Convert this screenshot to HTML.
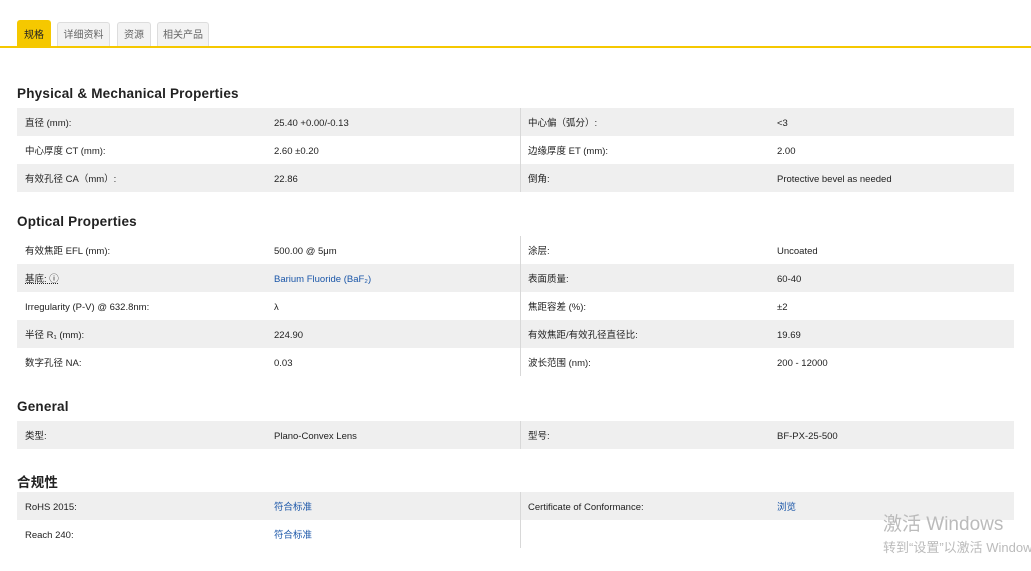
<!DOCTYPE html>
<html><head><meta charset="utf-8"><style>
*{margin:0;padding:0;box-sizing:border-box}
body{width:1031px;height:571px;background:#fff;position:relative;overflow:hidden;font-family:"Liberation Sans","Noto Sans CJK SC",sans-serif;color:#222}
.tab{position:absolute;font-size:10px;text-align:center;border:1px solid #ddd;border-bottom:none;background:#f3f3f3;color:#666;top:22px;height:25px;line-height:26px;border-radius:3px 3px 0 0}
.tab.on{background:#f5c800;border-color:#f5c800;color:#222;top:20px;height:27px;line-height:29px}
.line{position:absolute;left:0;top:46px;width:1031px;height:2px;background:#f5c800}
h2{position:absolute;left:17px;font-size:13.5px;font-weight:bold;color:#222;letter-spacing:.2px}
.row{position:absolute;left:17px;width:997px;height:28px;font-size:9.5px;line-height:28px}
.row.g{background:#efefef}
.row span{position:absolute;top:2px}
.a{left:8px}.b{left:257px}.c{left:511px}.d{left:760px}
.row:before{content:"";position:absolute;left:503px;top:0;width:1px;height:28px;background:#d8d8d8}
.lk{color:#1a56a8}
.wm1{position:absolute;left:883px;top:509px;font-size:19px;color:#bbb}
.wm2{position:absolute;left:883px;top:537px;font-size:13px;color:#bbb;white-space:nowrap}
</style></head><body>
<div class="tab on" style="left:17px;width:34px">规格</div>
<div class="tab" style="left:57px;width:53px">详细资料</div>
<div class="tab" style="left:117px;width:34px">资源</div>
<div class="tab" style="left:157px;width:52px">相关产品</div>
<div class="line"></div>

<h2 style="top:86px">Physical &amp; Mechanical Properties</h2>
<div class="row g" style="top:108px"><span class="a">直径 (mm):</span><span class="b">25.40 +0.00/-0.13</span><span class="c">中心偏（弧分）:</span><span class="d">&lt;3</span></div>
<div class="row" style="top:136px"><span class="a">中心厚度 CT (mm):</span><span class="b">2.60 ±0.20</span><span class="c">边缘厚度 ET (mm):</span><span class="d">2.00</span></div>
<div class="row g" style="top:164px"><span class="a">有效孔径 CA（mm）:</span><span class="b">22.86</span><span class="c">倒角:</span><span class="d">Protective bevel as needed</span></div>

<h2 style="top:214px">Optical Properties</h2>
<div class="row" style="top:236px"><span class="a">有效焦距 EFL (mm):</span><span class="b">500.00 @ 5μm</span><span class="c">涂层:</span><span class="d">Uncoated</span></div>
<div class="row g" style="top:264px"><span class="a" style="text-decoration:underline dotted">基底: ⓘ</span><span class="b lk">Barium Fluoride (BaF₂)</span><span class="c">表面质量:</span><span class="d">60-40</span></div>
<div class="row" style="top:292px"><span class="a">Irregularity (P-V) @ 632.8nm:</span><span class="b">λ</span><span class="c">焦距容差 (%):</span><span class="d">±2</span></div>
<div class="row g" style="top:320px"><span class="a">半径 R₁ (mm):</span><span class="b">224.90</span><span class="c">有效焦距/有效孔径直径比:</span><span class="d">19.69</span></div>
<div class="row" style="top:348px"><span class="a">数字孔径 NA:</span><span class="b">0.03</span><span class="c">波长范围 (nm):</span><span class="d">200 - 12000</span></div>

<h2 style="top:399px">General</h2>
<div class="row g" style="top:421px"><span class="a">类型:</span><span class="b">Plano-Convex Lens</span><span class="c">型号:</span><span class="d">BF-PX-25-500</span></div>

<h2 style="top:471px">合规性</h2>
<div class="row g" style="top:492px"><span class="a">RoHS 2015:</span><span class="b lk">符合标准</span><span class="c">Certificate of Conformance:</span><span class="d lk">浏览</span></div>
<div class="row" style="top:520px"><span class="a">Reach 240:</span><span class="b lk">符合标准</span></div>

<div class="wm1">激活 Windows</div>
<div class="wm2">转到“设置”以激活 Windows。</div>
</body></html>
